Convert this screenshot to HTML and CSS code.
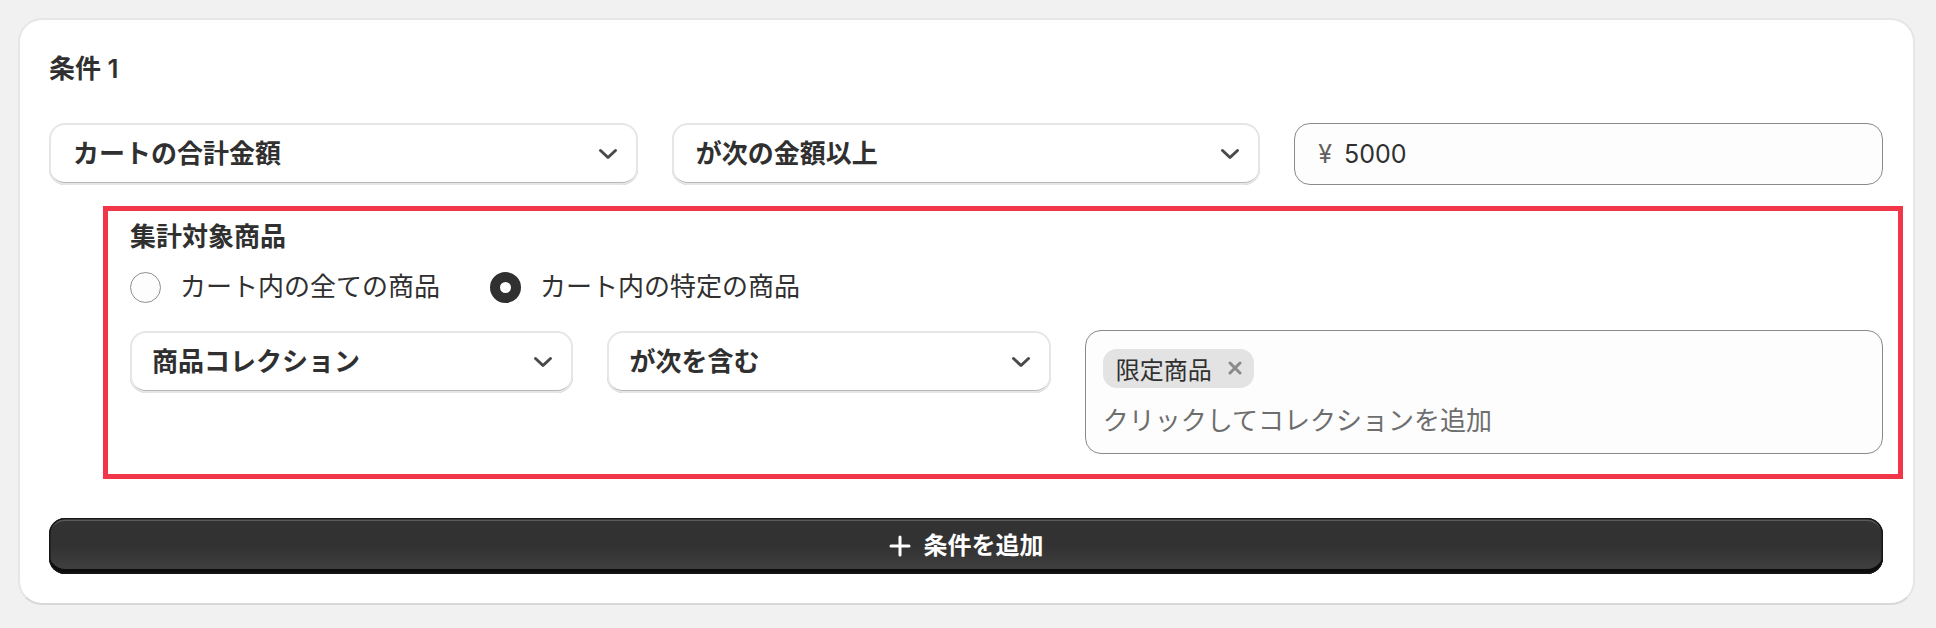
FILE: index.html
```html
<!DOCTYPE html>
<html lang="ja">
<head>
<meta charset="utf-8">
<title>条件</title>
<link rel="stylesheet" href="styles.css">
</head>
<body>
<div class="card">
  <h2 class="title">条件 1</h2>
  <div class="row3">
    <div class="select">
      <span class="select-label">カートの合計金額</span>
      <svg class="chev" viewBox="0 0 20 12" width="20" height="12"><path d="M2.5 2.5 L10 9.5 L17.5 2.5"/></svg>
    </div>
    <div class="select">
      <span class="select-label">が次の金額以上</span>
      <svg class="chev" viewBox="0 0 20 12" width="20" height="12"><path d="M2.5 2.5 L10 9.5 L17.5 2.5"/></svg>
    </div>
    <div class="field">
      <span class="prefix">¥</span>
      <span class="value">5000</span>
    </div>
  </div>

  <section class="scope">
    <h3 class="scope-title">集計対象商品</h3>
    <div class="radios">
      <label class="radio"><span class="dot"></span><span>カート内の全ての商品</span></label>
      <label class="radio"><span class="dot on"></span><span>カート内の特定の商品</span></label>
    </div>
    <div class="row-sub">
      <div class="select sub">
        <span class="select-label">商品コレクション</span>
        <svg class="chev" viewBox="0 0 20 12" width="20" height="12"><path d="M2.5 2.5 L10 9.5 L17.5 2.5"/></svg>
      </div>
      <div class="select sub">
        <span class="select-label">が次を含む</span>
        <svg class="chev" viewBox="0 0 20 12" width="20" height="12"><path d="M2.5 2.5 L10 9.5 L17.5 2.5"/></svg>
      </div>
      <div class="tagbox">
        <div class="tags">
          <span class="pill"><span>限定商品</span><svg class="x" viewBox="0 0 14 14" width="14" height="14"><path d="M2 2 L12 12 M12 2 L2 12"/></svg></span>
        </div>
        <div class="placeholder">クリックしてコレクションを追加</div>
      </div>
    </div>
  </section>

  <button class="add" type="button">
    <svg class="plus" viewBox="0 0 22 22" width="22" height="22"><path d="M11 2 V20 M2 11 H20"/></svg>
    <span>条件を追加</span>
  </button>
</div>
</body>
</html>
```

FILE: styles.css
```css
* { box-sizing: border-box; }

html, body {
  margin: 0;
  background: #f1f1f1;
}

body {
  padding: 18px 21px 0 18px;
  font-family: "Inter", "Noto Sans CJK JP", sans-serif;
  color: #303030;
}

.card {
  background: #ffffff;
  border: 2px solid #e6e6e6;
  border-bottom-color: #d8d8d8;
  border-radius: 24px;
  padding: 30px 30px 29px 29px;
}

.title {
  margin: 0;
  font-size: 26px;
  line-height: 38px;
  font-weight: 600;
  color: #303030;
}

.row3 {
  margin-top: 35px;
  display: grid;
  grid-template-columns: 1fr 1fr 1fr;
  gap: 34px;
}

.select {
  height: 62px;
  display: flex;
  align-items: center;
  justify-content: space-between;
  padding: 0 20px 0 24px;
  background: #ffffff;
  border-radius: 16px;
  box-shadow: inset 0 0 0 2px #e6e6e6, inset 0 -3px 0 0 #b8b8b8;
}

.select.sub {
  padding-left: 22px;
}

.select-label {
  font-size: 26px;
  font-weight: 600;
  line-height: 34px;
  color: #303030;
}

.chev {
  fill: none;
  stroke: #4a4a4a;
  stroke-width: 3;
  stroke-linecap: round;
  stroke-linejoin: round;
}

.field {
  height: 62px;
  display: flex;
  align-items: center;
  gap: 12px;
  padding-left: 23px;
  background: #fdfdfd;
  border: 1.5px solid #8a8a8a;
  border-radius: 16px;
  font-size: 25px;
}

.prefix { color: #616161; }
.value { color: #303030; }

.scope {
  margin: 21px -20px 0 54px;
  border: 5px solid #f1364a;
  padding: 9px 15px 20px 22px;
}

.scope-title {
  margin: 0;
  font-size: 26px;
  line-height: 34px;
  font-weight: 600;
}

.radios {
  margin-top: 13px;
  height: 40px;
  display: flex;
  align-items: center;
  gap: 50px;
}

.radio {
  display: flex;
  align-items: center;
  gap: 19px;
  font-size: 26px;
  line-height: 34px;
  color: #303030;
}

.dot {
  width: 31px;
  height: 31px;
  border-radius: 50%;
  border: 1.5px solid #8f8f8f;
  background: #fdfdfd;
}

.dot.on {
  border: 10.5px solid #303030;
  background: #ffffff;
}

.row-sub {
  margin-top: 24px;
  display: grid;
  grid-template-columns: 1fr 1fr 1.8fr;
  gap: 34px;
  align-items: start;
}

.tagbox {
  height: 124px;
  margin-top: -1px;
  background: #fdfdfd;
  border: 1.5px solid #8a8a8a;
  border-radius: 16px;
  padding: 17.5px 17px 0 17px;
}

.tags {
  display: flex;
}

.pill {
  height: 39px;
  display: inline-flex;
  align-items: center;
  gap: 16px;
  padding: 0 12px 0 13px;
  background: #e3e3e3;
  border-radius: 14px;
  font-size: 24px;
  color: #303030;
}

.x {
  fill: none;
  stroke: #8a8a8a;
  stroke-width: 3;
  stroke-linecap: round;
}

.placeholder {
  margin-top: 16px;
  font-size: 26px;
  line-height: 34px;
  color: #6e6e6e;
}

.add {
  margin-top: 39px;
  width: 100%;
  height: 56px;
  display: flex;
  align-items: center;
  justify-content: center;
  gap: 13px;
  border: none;
  border-radius: 16px;
  background: linear-gradient(to bottom, #333333 0%, #323232 50%, #3e3e3e 88%, #3e3e3e 100%);
  box-shadow: inset 0 0 0 1.5px #161616, inset 0 -5px 0 0 #0c0c0c, inset 0 3px 0 0 #5a5a5a;
  color: #ffffff;
  font-family: "Inter", "Noto Sans CJK JP", sans-serif;
  font-size: 24px;
  font-weight: 600;
  line-height: 32px;
  padding: 0;
}

.plus {
  fill: none;
  stroke: #ffffff;
  stroke-width: 3;
  stroke-linecap: round;
}
```
